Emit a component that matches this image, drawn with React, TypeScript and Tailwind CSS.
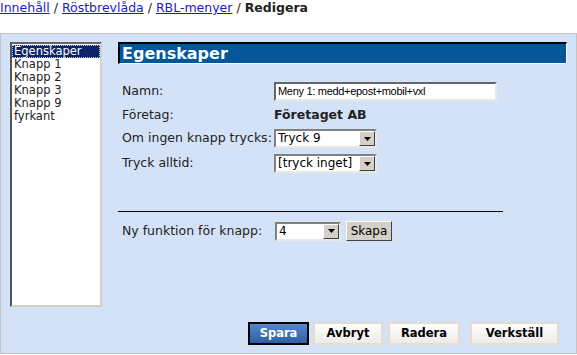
import React from "react";

const items = ["Egenskaper", "Knapp 1", "Knapp 2", "Knapp 3", "Knapp 9", "fyrkant"];

function DropArrow() {
  return (
    <span className="flex h-[15px] w-[16px] shrink-0 items-center justify-center border border-t-white border-l-white border-b-[#404040] border-r-[#404040] bg-[#d4d0c8]">
      <svg width="7" height="4" viewBox="0 0 7 4">
        <path d="M0 0h7L3.5 4z" fill="#000" />
      </svg>
    </span>
  );
}

function Select({ value, width }: { value: string; width: string }) {
  return (
    <div
      className={`flex h-[19px] items-center border-2 border-t-[#808080] border-l-[#808080] border-b-[#e8e8e8] border-r-[#e8e8e8] bg-white ${width}`}
    >
      <span className="flex-1 truncate pl-[2px] text-[12px] leading-[15px] text-black">{value}</span>
      <DropArrow />
    </div>
  );
}

function FormRow({ label, children, className = "" }: { label: string; children: React.ReactNode; className?: string }) {
  return (
    <div className={`flex h-[19px] items-center ${className}`}>
      <span className="w-[152px] shrink-0 text-[12.5px] text-[#222]">{label}</span>
      {children}
    </div>
  );
}

export default function App() {
  return (
    <div
      className="h-[355px] w-[577px] overflow-hidden bg-white"
      style={{ fontFamily: '"DejaVu Sans", Verdana, sans-serif' }}
    >
      {/* Breadcrumb */}
      <div className="h-[33px] text-[12.5px] leading-[16px] text-[#222]">
        <a className="text-[#1a1acc] underline">Innehåll</a>
        <span> / </span>
        <a className="text-[#1a1acc] underline">Röstbrevlåda</a>
        <span> / </span>
        <a className="text-[#1a1acc] underline">RBL-menyer</a>
        <span> / </span>
        <b>Redigera</b>
      </div>

      {/* Panel */}
      <div className="flex h-[321px] border border-[#c4c4c4] bg-[#d4e2f8] pl-[9px] pt-[8px]">
        {/* List box */}
        <div className="h-[265px] w-[92px] shrink-0 border-2 border-t-[#666] border-l-[#555] border-b-[#d4d0c8] border-r-[#d4d0c8] bg-white pt-[1px]">
          {items.map((it, i) => (
            <div
              key={it}
              className={`h-[13px] px-[2px] text-[11.5px] leading-[13px] ${
                i === 0 ? "bg-[#0a246a] text-white outline-1 outline-dotted -outline-offset-1 outline-[#d4d0c8]" : "text-[#222]"
              }`}
            >
              {it}
            </div>
          ))}
        </div>

        {/* Right column */}
        <div className="ml-[16px] flex w-[449px] flex-col">
          <div className="flex h-[22px] items-center border-t-2 border-l-2 border-t-black border-l-black border-r border-b border-r-white border-b-white bg-[#02579b] pl-[2px]">
            <span className="text-[16px] font-bold leading-[20px] text-white">Egenskaper</span>
          </div>

          <div className="pl-[4px]">
            <FormRow label="Namn:" className="mt-[18px]">
              <div className="flex h-[19px] w-[223px] items-center border-2 border-t-[#666] border-l-[#666] border-b-[#e8e8e8] border-r-[#e8e8e8] bg-white pl-[2px]">
                <span
                  className="text-[11px] tracking-[-0.3px] text-black"
                  style={{ fontFamily: '"Liberation Sans", Arial, sans-serif' }}
                >
                  Meny 1: medd+epost+mobil+vxl
                </span>
              </div>
            </FormRow>
            <FormRow label="Företag:" className="mt-[5px]">
              <span className="text-[12.5px] font-bold text-[#222]">Företaget AB</span>
            </FormRow>
            <FormRow label="Om ingen knapp trycks:" className="mt-[4px]">
              <Select value="Tryck 9" width="w-[103px]" />
            </FormRow>
            <FormRow label="Tryck alltid:" className="mt-[6px]">
              <Select value="[tryck inget]" width="w-[103px]" />
            </FormRow>
          </div>

          <div className="mt-[38px] h-px w-[385px] bg-black" />

          <div className="mt-[9px] flex h-[20px] items-center pl-[4px]">
            <span className="w-[153px] shrink-0 text-[12.5px] text-[#222]">Ny funktion för knapp:</span>
            <Select value="4" width="w-[66px]" />
            <button className="ml-[5px] h-[20px] w-[46px] border border-t-white border-l-white border-b-[#404040] border-r-[#404040] bg-[#d4d0c8] text-[12px] leading-[16px] text-black">
              Skapa
            </button>
          </div>

          <div className="mt-[81px] flex h-[23px] justify-end pr-[8px]">
            <button className="h-[23px] w-[61px] border-2 border-black bg-gradient-to-b from-[#5588cc] to-[#2f5ea6] text-[11.5px] font-bold text-white">
              Spara
            </button>
            <button className="ml-[4px] h-[23px] w-[70px] border-2 border-[#e2ddcf] bg-gradient-to-b from-white to-[#ecebe6] text-[11.5px] font-bold text-black">
              Avbryt
            </button>
            <button className="ml-[5px] h-[23px] w-[72px] border-2 border-[#e2ddcf] bg-gradient-to-b from-white to-[#ecebe6] text-[11.5px] font-bold text-black">
              Radera
            </button>
            <button className="ml-[10px] h-[23px] w-[89px] border-2 border-[#e2ddcf] bg-gradient-to-b from-white to-[#ecebe6] text-[11.5px] font-bold text-black">
              Verkställ
            </button>
          </div>
        </div>
      </div>
    </div>
  );
}
